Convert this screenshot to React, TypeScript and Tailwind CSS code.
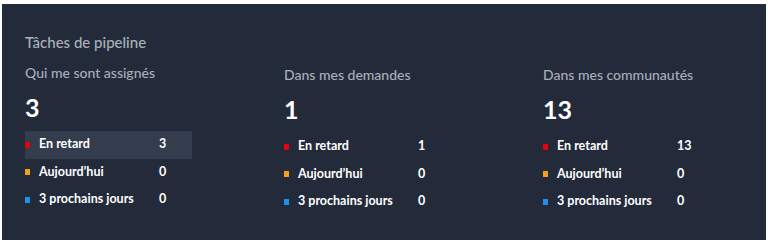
const rows = [
  { label: 'En retard', color: 'bg-[#e8000b]' },
  { label: 'Aujourd’hui', color: 'bg-[#f5a01a]' },
  { label: '3 prochains jours', color: 'bg-[#1e90ee]' },
];

const columns = [
  { title: 'Qui me sont assignés', total: 3, values: [3, 0, 0], active: 0 },
  { title: 'Dans mes demandes', total: 1, values: [1, 0, 0] },
  { title: 'Dans mes communautés', total: 13, values: [13, 0, 0] },
];

function Column({ col, shift }: { col: (typeof columns)[number]; shift: boolean }) {
  return (
    <div className={`w-[259px] shrink-0 ${shift ? 'mt-[2px]' : ''}`}>
      <h3 className="text-[14px] font-medium leading-[18px] text-[#a8afba]">{col.title}</h3>
      <p className="mt-[10px] text-[25px] font-bold leading-[30px] text-white">{col.total}</p>
      <ul className="mt-[9px] w-[167px]">
        {rows.map((r, i) => (
          <li
            key={r.label}
            className={`flex h-[27.5px] items-center text-[12.5px] font-bold text-white ${
              col.active === i ? 'bg-[#333d4e]' : ''
            }`}
          >
            <span className={`h-[6px] w-[5px] ${r.color}`} />
            <span className="ml-[9px] w-[120px]">{r.label}</span>
            <span>{col.values[i]}</span>
          </li>
        ))}
      </ul>
    </div>
  );
}

export default function App() {
  return (
    <div className="h-[240px] bg-white pt-[4px] pl-[2px] pr-[2px]" style={{ fontFamily: 'Lato, "Noto Sans", sans-serif' }}>
      <div className="h-[236px] overflow-hidden bg-[#232b3b] pl-[23px] pt-[28px]">
        <h2 className="text-[15px] font-medium leading-[20px] text-[#aab1bc]">Tâches de pipeline</h2>
        <div className="mt-[12px] flex">
          {columns.map((c, i) => (
            <Column key={c.title} col={c} shift={i > 0} />
          ))}
        </div>
      </div>
    </div>
  );
}
